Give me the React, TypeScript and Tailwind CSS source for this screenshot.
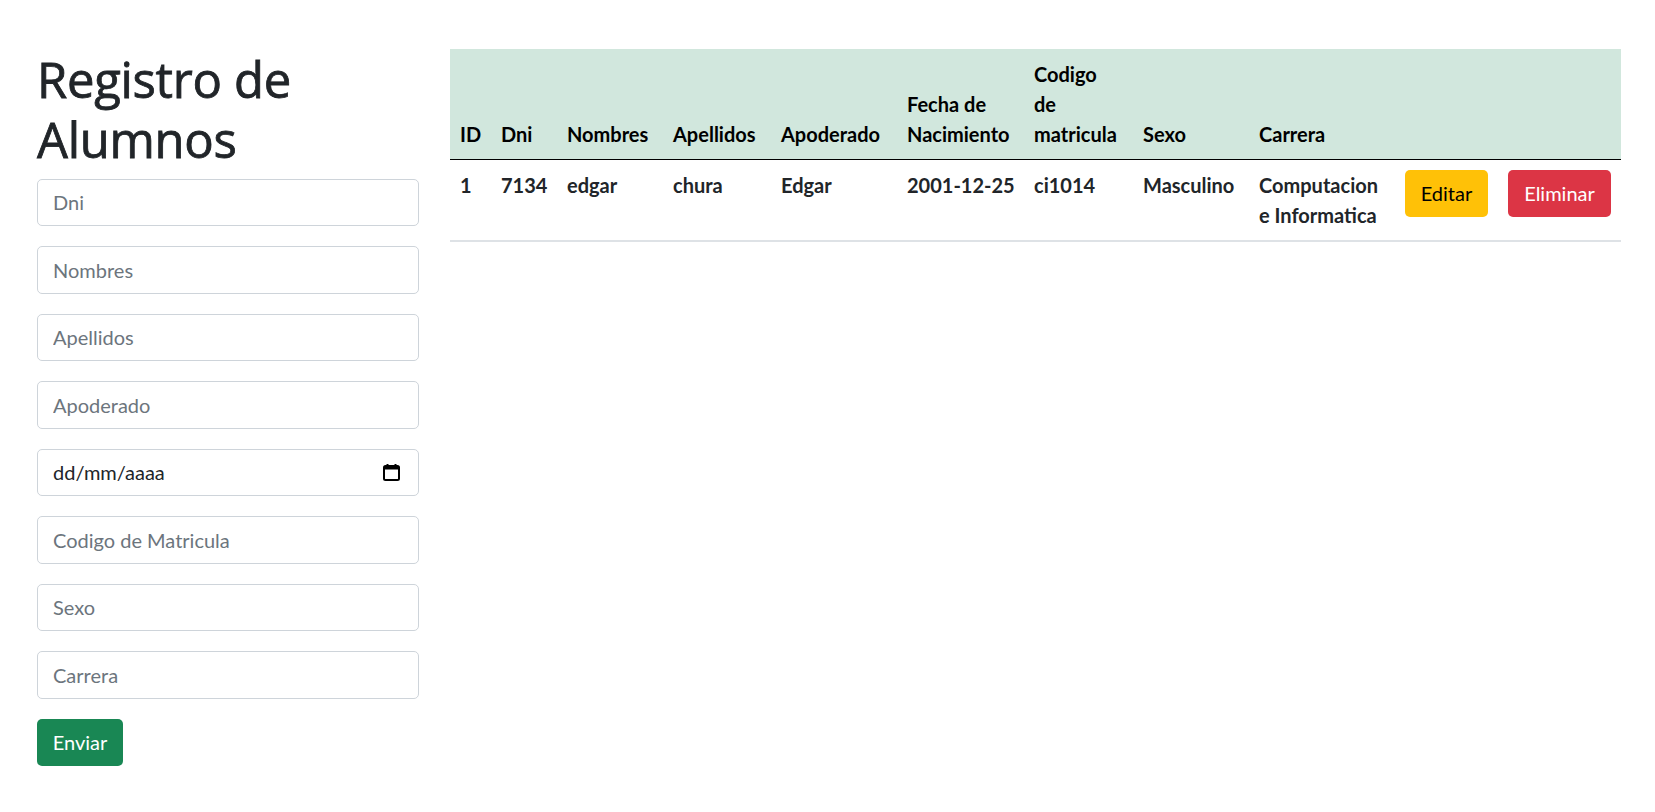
import React from "react";

const cols = [41, 66, 106, 108, 126, 127, 109, 116, 146, 103, 123];

function CalendarIcon() {
  return (
    <svg width="17" height="18" viewBox="0 0 17 18" fill="none">
      <rect x="1" y="3" width="15" height="14" rx="1.5" stroke="#000" strokeWidth="2" />
      <rect x="1" y="3" width="15" height="3.5" fill="#000" />
      <rect x="3.5" y="1" width="2" height="3" fill="#000" />
      <rect x="11.5" y="1" width="2" height="3" fill="#000" />
    </svg>
  );
}

const inputCls =
  "block w-full h-[47.5px] px-[15px] border border-[#ced4da] rounded-[5px] bg-white text-[20px] leading-[30px] text-[#212529] placeholder:text-[#6c757d] outline-none";

export default function App() {
  const placeholders1 = ["Dni", "Nombres", "Apellidos", "Apoderado"];
  const placeholders2 = ["Codigo de Matricula", "Sexo", "Carrera"];
  return (
    <div className="min-h-screen bg-white font-['Lato','Liberation_Sans',sans-serif] text-[#212529] text-[20px] leading-[30px]">
      <div className="flex items-start pt-[48.5px] pl-[37px] gap-[31px]">
        <div className="w-[382px] shrink-0">
          <h1 className="font-['Open_Sans','Lato',sans-serif] text-[49px] leading-[60px] font-normal mb-[10px] tracking-[-0.3px] [-webkit-text-stroke:0.8px_#212529]">
            Registro de
            <br />
            Alumnos
          </h1>
          <form className="flex flex-col gap-[20px]" onSubmit={(e) => e.preventDefault()}>
            {placeholders1.map((p) => (
              <input key={p} type="text" placeholder={p} className={inputCls} />
            ))}
            <div className="relative">
              <input
                type="text"
                placeholder="dd/mm/aaaa"
                className={inputCls + " placeholder:text-[#212529]"}
              />
              <div className="absolute right-[19px] top-[14px] pointer-events-none">
                <CalendarIcon />
              </div>
            </div>
            {placeholders2.map((p) => (
              <input key={p} type="text" placeholder={p} className={inputCls} />
            ))}
            <div>
              <button
                type="submit"
                className="w-[86px] h-[47.5px] rounded-[5px] bg-[#198754] text-white text-[20px] leading-[30px]"
              >
                Enviar
              </button>
            </div>
          </form>
        </div>
        <table className="w-[1171px] table-fixed border-collapse font-bold shrink-0">
          <colgroup>
            {cols.map((w, i) => (
              <col key={i} style={{ width: w }} />
            ))}
          </colgroup>
          <thead>
            <tr className="bg-[#d1e7dd] text-black">
              {[
                "ID",
                "Dni",
                "Nombres",
                "Apellidos",
                "Apoderado",
                <>Fecha de<br />Nacimiento</>,
                <>Codigo<br />de<br />matricula</>,
                "Sexo",
                "Carrera",
                "",
                "",
              ].map((h, i) => (
                <th
                  key={i}
                  className="text-left align-bottom px-[10px] py-[10px] leading-[30px] border-b border-black whitespace-nowrap"
                >
                  {h}
                </th>
              ))}
            </tr>
          </thead>
          <tbody>
            <tr>
              {["1", "7134", "edgar", "chura", "Edgar", "2001-12-25", "ci1014", "Masculino"].map((c, i) => (
                <td
                  key={i}
                  className="align-top px-[10px] py-[10px] leading-[30px] border-b-2 border-[#dee2e6] whitespace-nowrap"
                >
                  {c}
                </td>
              ))}
              <td className="align-top px-[10px] py-[10px] leading-[30px] border-b-2 border-[#dee2e6] whitespace-nowrap">
                Computacion
                <br />e Informatica
              </td>
              <td className="align-top px-[10px] py-[10px] border-b-2 border-[#dee2e6]">
                <button className="w-[83px] h-[47.5px] rounded-[5px] bg-[#ffc107] text-black font-normal text-[20px] leading-[30px]">
                  Editar
                </button>
              </td>
              <td className="align-top px-[10px] py-[10px] border-b-2 border-[#dee2e6]">
                <button className="w-[103px] h-[47.5px] rounded-[5px] bg-[#dc3545] text-white font-normal text-[20px] leading-[30px]">
                  Eliminar
                </button>
              </td>
            </tr>
          </tbody>
        </table>
      </div>
    </div>
  );
}
